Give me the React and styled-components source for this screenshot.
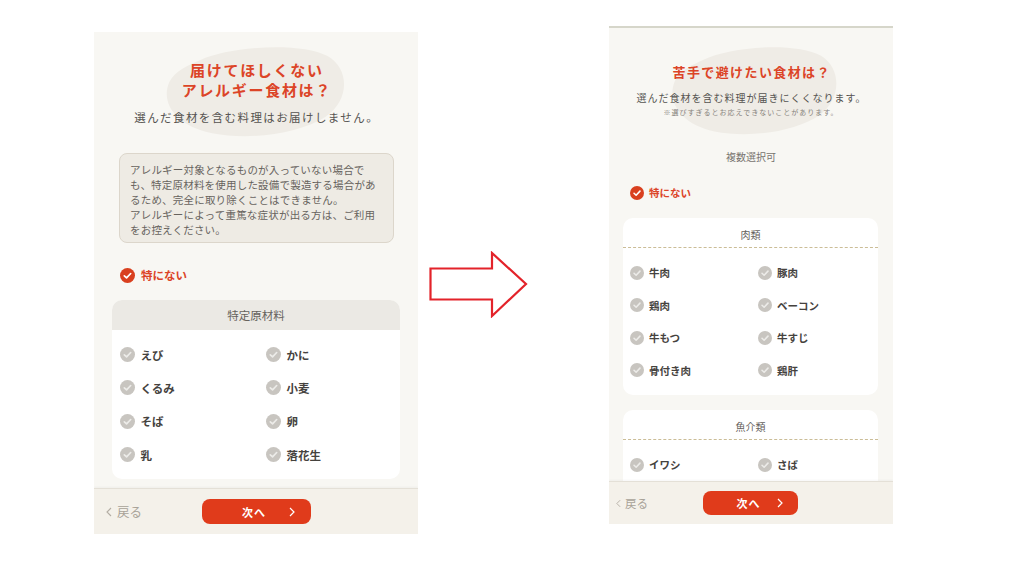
import React from 'react';
import styled, { createGlobalStyle } from 'styled-components';

const GlobalStyle = createGlobalStyle`
  html, body { margin: 0; padding: 0; background: #ffffff; }
  body {
    width: 1024px; height: 576px; overflow: hidden;
    font-family: "Noto Sans CJK JP", "Noto Sans", sans-serif;
  }
  * { box-sizing: border-box; }
`;

const RED = '#dc4427';
const BTN = '#e03b1b';

const Stage = styled.main`
  display: flex;
  align-items: flex-start;
  width: 1024px;
  height: 576px;
  padding-left: 94px;
`;

const Phone = styled.section`
  flex-shrink: 0;
  width: ${(p) => p.$w}px;
  height: ${(p) => p.$h}px;
  margin-top: ${(p) => p.$mt}px;
  margin-left: ${(p) => p.$ml || 0}px;
  background: #f8f7f3;
  border-top: ${(p) => (p.$line ? '2px solid #d6d6ca' : 'none')};
  display: flex;
  flex-direction: column;
  overflow: hidden;
`;

const Scroll = styled.div`
  flex: 1;
  min-height: 0;
  overflow: hidden;
`;

const Hero = styled.header`
  position: relative;
  text-align: center;
  padding-top: ${(p) => p.$pt}px;
`;

const BlobSvg = styled.svg`
  position: absolute;
  left: ${(p) => p.$x}px;
  top: ${(p) => p.$y}px;
  width: ${(p) => p.$bw}px;
  height: ${(p) => p.$bh}px;
  z-index: 0;
`;

const Blob = ({ x, y, w, h }) => (
  <BlobSvg $x={x} $y={y} $bw={w} $bh={h} viewBox="0 0 200 100" preserveAspectRatio="none">
    <path
      d="M42 16 C72 2 148 -4 178 12 C202 26 202 60 176 78 C148 96 96 104 54 96 C14 88 -2 62 8 40 C14 28 28 22 42 16 Z"
      fill="#efece6"
    />
  </BlobSvg>
);

const Title = styled.h1`
  position: relative;
  z-index: 1;
  margin: 0;
  font-size: ${(p) => p.$fs}px;
  line-height: ${(p) => p.$lh}px;
  letter-spacing: ${(p) => p.$ls}px;
  padding-left: ${(p) => p.$ls}px;
  font-weight: 700;
  color: ${RED};
`;

const Lead = styled.p`
  position: relative;
  z-index: 1;
  margin: ${(p) => p.$mt}px 0 0;
  font-size: ${(p) => p.$fs}px;
  line-height: ${(p) => p.$lh}px;
  letter-spacing: ${(p) => p.$ls}px;
  padding-left: ${(p) => p.$ls}px;
  color: #555350;
`;

const Caution = styled.p`
  position: relative;
  z-index: 1;
  margin: 2px 0 0;
  font-size: 7px;
  line-height: 10px;
  letter-spacing: 1px;
  color: #86827c;
`;

const Notice = styled.div`
  margin: 28px 24px 0 25px;
  padding: 8px 10px 5px;
  background: #eeebe4;
  border: 1px solid #dcd6cb;
  border-radius: 8px;
  font-size: 10.5px;
  line-height: 15px;
  letter-spacing: 0.2px;
  color: #67635e;
`;

const Hint = styled.p`
  margin: 33px 0 0;
  text-align: center;
  font-size: 10px;
  line-height: 14px;
  color: #77736e;
`;

const NoneOption = styled.div`
  display: flex;
  align-items: center;
  gap: ${(p) => p.$gap}px;
  height: ${(p) => p.$h}px;
  margin-top: ${(p) => p.$mt}px;
  padding-left: ${(p) => p.$pl}px;
  font-size: ${(p) => p.$fs}px;
  font-weight: 700;
  color: ${RED};
`;

const Card = styled.div`
  margin: ${(p) => p.$mt}px ${(p) => p.$mr}px 0 ${(p) => p.$ml}px;
  background: #ffffff;
  border-radius: 10px;
  overflow: hidden;
`;

const CardHead = styled.div`
  text-align: center;
  color: #66625d;
  font-size: ${(p) => p.$fs}px;
  line-height: 17px;
  ${(p) =>
    p.$dashed
      ? `padding: 8px 0 4px; border-bottom: 1px dashed #cbbd97;`
      : `padding: 7px 0 6px; background: #ebe9e4;`}
`;

const Grid = styled.div`
  display: grid;
  grid-template-columns: ${(p) => p.$col}px 1fr;
  grid-auto-rows: ${(p) => p.$row}px;
  padding: ${(p) => p.$pt}px 0 ${(p) => p.$pb}px ${(p) => p.$pl}px;
`;

const Item = styled.div`
  display: flex;
  align-items: center;
  gap: ${(p) => p.$gap}px;
  font-size: ${(p) => p.$fs}px;
  font-weight: 700;
  color: #45423e;
  white-space: nowrap;
`;

const CheckSvg = styled.svg`
  flex-shrink: 0;
  width: ${(p) => p.$s}px;
  height: ${(p) => p.$s}px;
`;

const Check = ({ size, on }) => (
  <CheckSvg $s={size} viewBox="0 0 16 16">
    <circle cx="8" cy="8" r="8" fill={on ? '#d9401f' : '#c8c5c0'} />
    <path
      d="M4.6 8.3 L7 10.6 L11.4 5.9"
      fill="none"
      stroke={on ? '#ffffff' : '#ecebe8'}
      strokeWidth="1.8"
      strokeLinecap="round"
      strokeLinejoin="round"
    />
  </CheckSvg>
);

const Footer = styled.footer`
  flex-shrink: 0;
  height: ${(p) => p.$h}px;
  display: flex;
  align-items: center;
  padding-left: ${(p) => p.$pl}px;
  background: #f4f1ea;
  border-top: 1px solid #e4e0d7;
  box-shadow: 0 -1px 2px rgba(0, 0, 0, 0.04);
`;

const Back = styled.div`
  width: ${(p) => p.$w}px;
  display: flex;
  align-items: center;
  gap: ${(p) => p.$gap}px;
  font-size: ${(p) => p.$fs}px;
  color: #a8a298;
`;

const ChevSvg = styled.svg`
  width: ${(p) => p.$w}px;
  height: ${(p) => p.$h}px;
  flex-shrink: 0;
`;

const ChevLeft = ({ w, h }) => (
  <ChevSvg $w={w} $h={h} viewBox="0 0 6 10">
    <path d="M5 1 L1 5 L5 9" fill="none" stroke="#b3ada3" strokeWidth="1.1" />
  </ChevSvg>
);

const NextButton = styled.button`
  position: relative;
  width: ${(p) => p.$w}px;
  height: ${(p) => p.$h}px;
  border: none;
  border-radius: 8px;
  background: ${BTN};
  color: #ffffff;
  font-family: inherit;
  font-size: 11px;
  font-weight: 700;
  letter-spacing: 1px;
  display: flex;
  align-items: center;
  justify-content: center;
  padding: 0 ${(p) => p.$pr}px 0 0;
`;

const ChevRightBox = styled.svg`
  position: absolute;
  right: ${(p) => p.$r}px;
  top: 50%;
  width: 6px;
  height: 10px;
  margin-top: -5px;
`;

const ChevRight = ({ r }) => (
  <ChevRightBox $r={r} viewBox="0 0 6 10">
    <path d="M1 1 L5 5 L1 9" fill="none" stroke="#ffffff" strokeWidth="1.2" />
  </ChevRightBox>
);

const ArrowSvg = styled.svg`
  flex-shrink: 0;
  width: 99px;
  height: 67px;
  margin-left: 11px;
  margin-top: 251px;
`;

const Arrow = () => (
  <ArrowSvg viewBox="0 0 99 67">
    <path
      d="M1.5 17.5 H63 V2 L97 33 L63 65 V48.5 H1.5 Z"
      fill="#ffffff"
      stroke="#e3232a"
      strokeWidth="2.2"
      strokeLinejoin="miter"
    />
  </ArrowSvg>
);

const allergens = ['えび', 'かに', 'くるみ', '小麦', 'そば', '卵', '乳', '落花生'];
const meats = ['牛肉', '豚肉', '鶏肉', 'ベーコン', '牛もつ', '牛すじ', '骨付き肉', '鶏肝'];
const fish = ['イワシ', 'さば'];

function AllergyScreen() {
  return (
    <Phone $w={324} $h={502} $mt={32}>
      <Scroll>
        <Hero $pt={28}>
          <Blob x={68} y={13} w={186} h={92} />
          <Title $fs={15} $lh={20} $ls={1.7}>
            届けてほしくない
            <br />
            アレルギー食材は？
          </Title>
          <Lead $mt={9} $fs={11.5} $lh={16} $ls={1.4}>
            選んだ食材を含む料理はお届けしません。
          </Lead>
        </Hero>
        <Notice>
          アレルギー対象となるものが入っていない場合で
          <br />
          も、特定原材料を使用した設備で製造する場合があ
          <br />
          るため、完全に取り除くことはできません。
          <br />
          アレルギーによって重篤な症状が出る方は、ご利用
          <br />
          をお控えください。
        </Notice>
        <NoneOption $gap={6} $h={16} $mt={24} $pl={26} $fs={11.5}>
          <Check size={15} on />
          特にない
        </NoneOption>
        <Card $mt={17} $ml={18} $mr={18}>
          <CardHead $fs={11.5}>特定原材料</CardHead>
          <Grid $col={146} $row={33.3} $pt={8} $pb={8} $pl={7.5}>
            {allergens.map((a) => (
              <Item key={a} $gap={6} $fs={11.5}>
                <Check size={15} />
                {a}
              </Item>
            ))}
          </Grid>
        </Card>
      </Scroll>
      <Footer $h={46} $pl={12}>
        <Back $w={96} $gap={5} $fs={12.5}>
          <ChevLeft w={6} h={10} />
          戻る
        </Back>
        <NextButton $w={109} $h={25} $pr={5}>
          次へ
          <ChevRight r={16} />
        </NextButton>
      </Footer>
    </Phone>
  );
}

function DislikeScreen() {
  return (
    <Phone $w={284} $h={498} $mt={26} $ml={81} $line>
      <Scroll>
        <Hero $pt={35}>
          <Blob x={59} y={17} w={172} h={90} />
          <Title $fs={13} $lh={18} $ls={1.4}>
            苦手で避けたい食材は？
          </Title>
          <Lead $mt={10} $fs={10} $lh={14} $ls={1}>
            選んだ食材を含む料理が届きにくくなります。
          </Lead>
          <Caution>※選びすぎるとお応えできないことがあります。</Caution>
        </Hero>
        <Hint>複数選択可</Hint>
        <NoneOption $gap={5} $h={15} $mt={21} $pl={21} $fs={10.5}>
          <Check size={14} on />
          特にない
        </NoneOption>
        <Card $mt={18} $ml={14} $mr={15}>
          <CardHead $fs={10} $dashed>
            肉類
          </CardHead>
          <Grid $col={128} $row={32.5} $pt={8.5} $pb={8.5} $pl={7}>
            {meats.map((m) => (
              <Item key={m} $gap={5} $fs={10.5}>
                <Check size={14} />
                {m}
              </Item>
            ))}
          </Grid>
        </Card>
        <Card $mt={15} $ml={14} $mr={15}>
          <CardHead $fs={10} $dashed>
            魚介類
          </CardHead>
          <Grid $col={128} $row={32.5} $pt={8.5} $pb={24} $pl={7}>
            {fish.map((f) => (
              <Item key={f} $gap={5} $fs={10.5}>
                <Check size={14} />
                {f}
              </Item>
            ))}
          </Grid>
        </Card>
      </Scroll>
      <Footer $h={43} $pl={7}>
        <Back $w={87} $gap={4} $fs={11.5}>
          <ChevLeft w={5} h={9} />
          戻る
        </Back>
        <NextButton $w={95} $h={24} $pr={4}>
          次へ
          <ChevRight r={15} />
        </NextButton>
      </Footer>
    </Phone>
  );
}

export default function App() {
  return (
    <>
      <GlobalStyle />
      <Stage>
        <AllergyScreen />
        <Arrow />
        <DislikeScreen />
      </Stage>
    </>
  );
}
